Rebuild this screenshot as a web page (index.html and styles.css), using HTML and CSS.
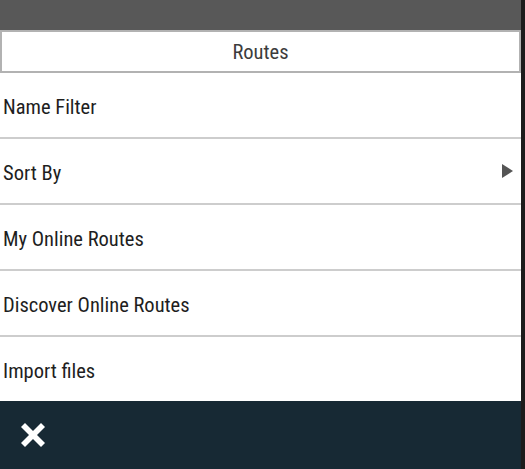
FILE: index.html
```html
<!DOCTYPE html>
<html>
<head>
<meta charset="utf-8">
<link rel="stylesheet" href="styles.css">
</head>
<body>
<div class="screen">
  <div class="main">
    <div class="topbar"></div>
    <div class="title">Routes</div>
    <ul class="menu">
      <li class="item">Name Filter</li>
      <li class="item">Sort By<span class="arrow"></span></li>
      <li class="item">My Online Routes</li>
      <li class="item">Discover Online Routes</li>
      <li class="item">Import files</li>
    </ul>
    <div class="bottombar">
      <svg class="close" width="26" height="26" viewBox="0 0 26 26">
        <path d="M5 1 L13 9 L21 1 L25 5 L17 13 L25 21 L21 25 L13 17 L5 25 L1 21 L9 13 L1 5 Z" fill="#ffffff"/>
      </svg>
    </div>
  </div>
  <div class="edge"></div>
</div>
</body>
</html>
```
FILE: styles.css
```css
html, body {
  margin: 0;
  padding: 0;
  background: #1c1c1c;
}
.screen {
  display: flex;
  width: 525px;
  height: 469px;
  font-family: "Liberation Sans Narrow", "Roboto Condensed", Roboto, sans-serif;
}
.main {
  width: 521px;
  display: flex;
  flex-direction: column;
  background: #ffffff;
}
.edge {
  width: 4px;
  background: #1c1c1c;
}
.topbar {
  height: 30px;
  background: #585858;
}
.title {
  height: 39px;
  border: 2px solid #b2b2b2;
  display: flex;
  align-items: center;
  justify-content: center;
  font-size: 20.5px;
  color: #3c3c3c;
  background: #ffffff;
}
.menu {
  list-style: none;
  margin: 0;
  padding: 0;
  flex: 1;
}
.item {
  border-bottom: 2px solid #cdcdcd;
  display: flex;
  align-items: center;
  justify-content: space-between;
  padding: 3px 8px 0 3px;
  box-sizing: border-box;
  height: 66px;
  font-size: 20.5px;
  color: #1e1e1e;
}
.item:last-child {
  border-bottom: none;
  height: 64px;
}
.arrow {
  width: 0;
  height: 0;
  margin-top: -3px;
  border-top: 7px solid transparent;
  border-bottom: 7px solid transparent;
  border-left: 11px solid #555555;
}
.bottombar {
  height: 68px;
  background: #172934;
  display: flex;
  align-items: center;
  padding-left: 20px;
}
.close {
  display: block;
}
```
